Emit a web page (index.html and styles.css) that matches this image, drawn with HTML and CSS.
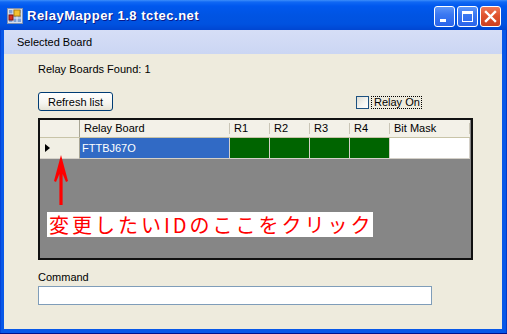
FILE: index.html
```html
<!DOCTYPE html>
<html lang="ja">
<head>
<meta charset="utf-8">
<title>RelayMapper 1.8 tctec.net</title>
<link rel="stylesheet" href="styles.css">
</head>
<body>
<div class="window">
  <div class="titlebar">
    <svg class="app-icon" width="16" height="16" viewBox="0 0 16 16">
      <rect x="0.5" y="0.5" width="15" height="15" fill="#d8e0ee" stroke="#8090b0"/>
      <rect x="2" y="2" width="12" height="12" fill="#7fa2d8"/>
      <path d="M2 6H14M2 10H14M6 2V14M10 2V14" stroke="#e8eef8" stroke-width="1"/>
      <rect x="7" y="2" width="6" height="6" fill="#f2c230" stroke="#b08010" stroke-width="1"/>
      <rect x="2" y="7" width="4" height="5" fill="#d83020" stroke="#801010" stroke-width="1"/>
    </svg>
    <span class="title">RelayMapper 1.8 tctec.net</span>
    <div class="caption-buttons">
      <span class="cbtn cbtn-blue"><span class="glyph-min"></span></span>
      <span class="cbtn cbtn-blue"><span class="glyph-max"></span></span>
      <span class="cbtn cbtn-close">
        <svg width="13" height="13" viewBox="0 0 13 13"><path d="M2 2L11 11M11 2L2 11" stroke="#fff" stroke-width="2.4" stroke-linecap="square"/></svg>
      </span>
    </div>
  </div>
  <div class="client">
    <div class="menubar"><span class="menu-item">Selected Board</span></div>
    <div class="content">
      <div class="found">Relay Boards Found: 1</div>
      <div class="toolbar">
        <button class="refresh" type="button">Refresh list</button>
        <label class="check">
          <span class="check-box"></span>
          <span class="check-label">Relay On</span>
        </label>
      </div>
      <div class="grid">
        <div class="grid-row grid-head">
          <div class="cell rowhead"></div>
          <div class="cell col-board">Relay Board</div>
          <div class="cell col-r">R1</div>
          <div class="cell col-r">R2</div>
          <div class="cell col-r">R3</div>
          <div class="cell col-r">R4</div>
          <div class="cell col-mask">Bit Mask</div>
        </div>
        <div class="grid-row grid-data">
          <div class="cell rowhead"><span class="current-mark"></span></div>
          <div class="cell col-board selected">FTTBJ67O</div>
          <div class="cell col-r on"></div>
          <div class="cell col-r on"></div>
          <div class="cell col-r on"></div>
          <div class="cell col-r on"></div>
          <div class="cell col-mask"></div>
        </div>
        <svg class="arrow" width="16" height="52" viewBox="0 0 16 52">
          <path d="M8 0L15 26L13 27L9.6 19L9.6 50L6.4 50L6.4 19L3 27L1 26Z" fill="#ff0000"/>
        </svg>
        <div class="callout">変更したいIDのここをクリック</div>
      </div>
      <div class="cmd-label">Command</div>
      <div class="cmd-input"></div>
    </div>
  </div>
</div>
</body>
</html>
```
FILE: styles.css
```css
* { box-sizing: border-box; }

html, body {
  margin: 0;
  padding: 0;
  width: 507px;
  height: 334px;
  overflow: hidden;
  background: #ffffff;
}

body {
  font-family: "Liberation Sans", Arial, sans-serif;
  font-size: 11px;
  color: #000;
}

.window {
  width: 507px;
  height: 334px;
  display: flex;
  flex-direction: column;
  background: linear-gradient(to right, #0030c8 0, #0858e8 1px, #0858e8 calc(100% - 1px), #0020a8 100%);
  border-bottom: 1px solid #00138c;
}

/* Title bar */
.titlebar {
  height: 30px;
  flex: none;
  display: flex;
  align-items: center;
  padding: 0 6px 0 7px;
  background: linear-gradient(to bottom, #3d8efa 0, #1068f4 2px, #0058ee 6px, #0054e3 50%, #0052e0 80%, #0046d2 100%);
}

.app-icon {
  flex: none;
  margin-top: 1px;
}

.title {
  margin-left: 4px;
  color: #fff;
  font-weight: bold;
  font-size: 13px;
  letter-spacing: 0.5px;
  text-shadow: 1px 1px 0 #0a1a8a;
  white-space: nowrap;
}

.caption-buttons {
  margin-left: auto;
  display: flex;
  gap: 2px;
  margin-top: 2px;
}

.cbtn {
  width: 21px;
  height: 21px;
  border: 1px solid #fff;
  border-radius: 3px;
  display: flex;
  align-items: center;
  justify-content: center;
  position: relative;
}

.cbtn-blue {
  background: linear-gradient(to bottom, #5c95f8 0, #3a78f2 40%, #2a64ea 100%);
}

.cbtn-close {
  background: linear-gradient(to bottom, #ee7858 0, #e0532e 45%, #cc4020 100%);
}

.glyph-min {
  position: absolute;
  left: 5px;
  top: 12px;
  width: 6px;
  height: 3px;
  background: #fff;
}

.glyph-max {
  width: 11px;
  height: 11px;
  border: 1px solid #fff;
  border-top-width: 3px;
}

/* Client area */
.client {
  flex: 1;
  margin: 0 5px 4px 4px;
  background: #eeebdd;
  display: flex;
  flex-direction: column;
}

.menubar {
  height: 24px;
  flex: none;
  display: flex;
  align-items: center;
  padding-left: 13px;
  background: linear-gradient(to bottom, #d6def6 0, #cbd6f3 100%);
}

.menu-item {
  font-size: 11px;
  line-height: 13px;
}

.content {
  flex: 1;
  display: flex;
  flex-direction: column;
  padding-left: 34px;
}

.found {
  margin-top: 9px;
  line-height: 13px;
}

.toolbar {
  margin-top: 16px;
  height: 19px;
  display: flex;
  align-items: center;
}

.refresh {
  width: 75px;
  height: 19px;
  padding: 0;
  margin: 0;
  font-family: inherit;
  font-size: 11px;
  color: #000;
  border: 1px solid #003c74;
  border-radius: 3px;
  background: linear-gradient(to bottom, #ffffff 0, #f6f5f0 60%, #e6e3d6 100%);
}

.check {
  margin-left: 243px;
  display: flex;
  align-items: center;
  margin-top: 2px;
}

.check-box {
  width: 13px;
  height: 13px;
  border: 1px solid #1c5180;
  background: linear-gradient(135deg, #dcdcd4 0, #f6f6f2 60%, #ffffff 100%);
}

.check-label {
  margin-left: 3px;
  padding: 0 1px 0 2px;
  line-height: 11px;
  outline: 1px dotted #000;
}

/* Data grid */
.grid {
  position: relative;
  margin-top: 7px;
  width: 435px;
  height: 142px;
  border: 2px solid #111;
  background: #868686;
}

.grid-row {
  display: flex;
}

.cell {
  flex: none;
  border-right: 1px solid #d4d0c8;
  border-bottom: 1px solid #d4d0c8;
}

.rowhead { width: 40px; border-right-color: #a8a594; }
.col-board { width: 150px; }
.col-r { width: 40px; }
.col-mask { width: 80px; }

.grid-head .cell {
  height: 18px;
  line-height: 17px;
  padding-left: 4px;
  background: #f3f1e8;
  border-right: none;
  border-bottom: 1px solid #c8c4a8;
  position: relative;
}

.grid-head .cell::after {
  content: "";
  position: absolute;
  right: 0;
  top: 3px;
  bottom: 3px;
  width: 1px;
  background: #c9c5b6;
}

.grid-head .rowhead::after {
  top: 0;
  bottom: 0;
  background: #a8a594;
}

.grid-data .cell {
  height: 21px;
  line-height: 20px;
  background: #fff;
}

.grid-data .rowhead {
  background: #f1efe4;
  position: relative;
}

.current-mark {
  position: absolute;
  left: 5px;
  top: 6px;
  width: 0;
  height: 0;
  border-left: 5px solid #000;
  border-top: 4.5px solid transparent;
  border-bottom: 4.5px solid transparent;
}

.selected {
  background: #316ac5 !important;
  color: #fff;
  padding-left: 2px;
}

.on {
  background: #006400 !important;
}

.arrow {
  position: absolute;
  left: 13px;
  top: 35px;
}

.callout {
  position: absolute;
  left: 7px;
  top: 92px;
  width: 326px;
  height: 25px;
  padding-left: 2px;
  background: #fff;
  color: #ff0000;
  font-family: "Noto Sans CJK JP", "Noto Sans CJK SC", sans-serif;
  font-size: 20px;
  line-height: 25px;
  letter-spacing: 3px;
  white-space: nowrap;
}

.cmd-label {
  margin-top: 11px;
  line-height: 13px;
}

.cmd-input {
  margin-top: 2px;
  width: 394px;
  height: 19px;
  border: 1px solid #7f9db9;
  background: #fff;
}
```
